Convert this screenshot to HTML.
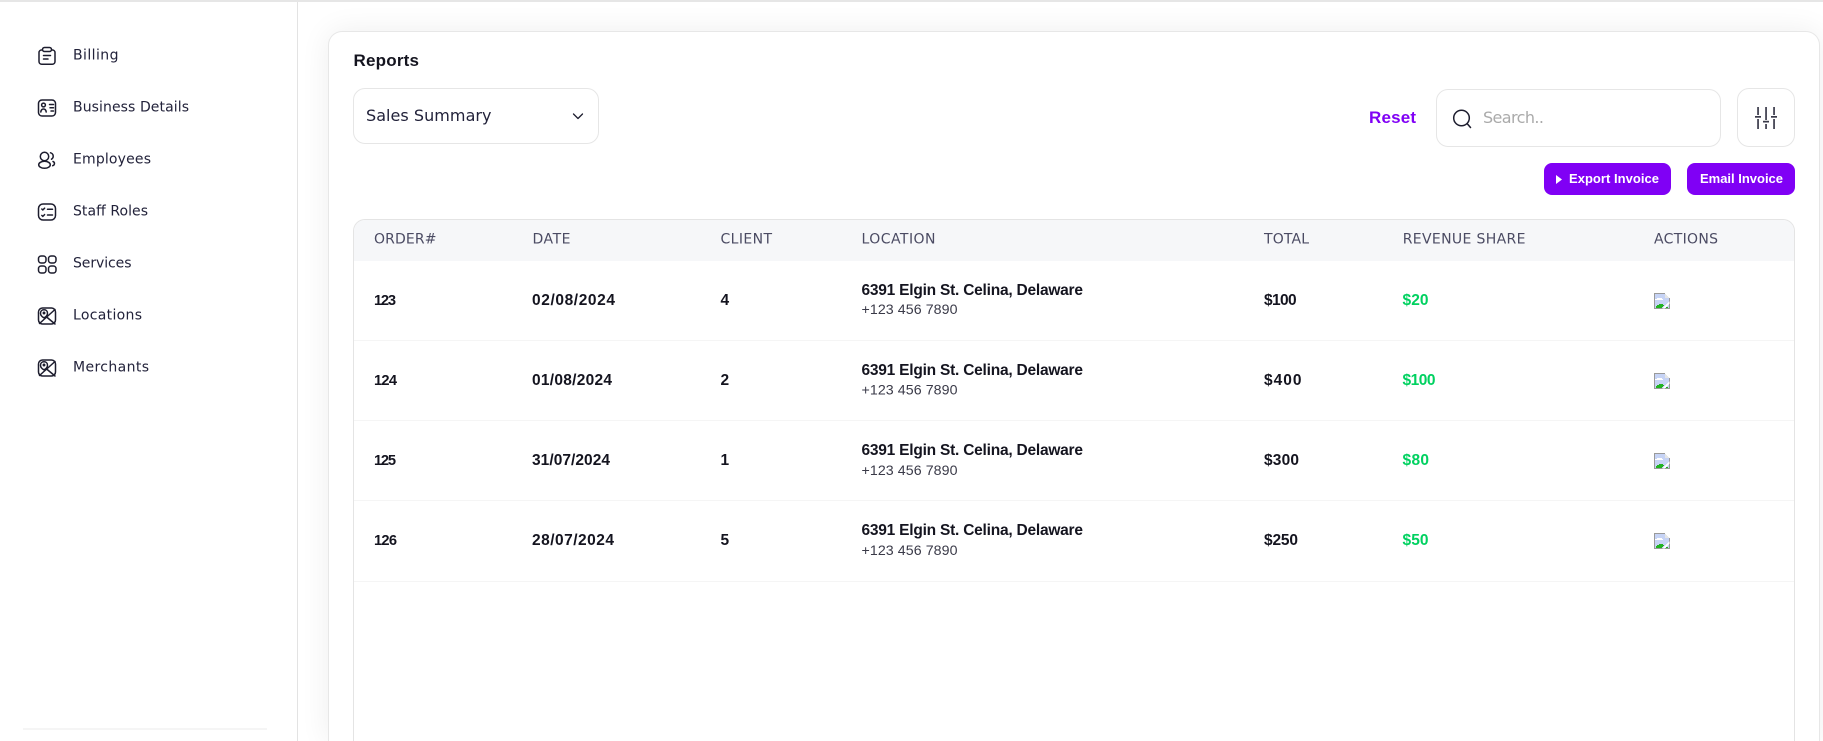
<!DOCTYPE html>
<html><head><meta charset="utf-8"><title>Reports</title>
<style>
html,body{margin:0;padding:0;width:1823px;height:741px;overflow:hidden;background:#fff}
#root{position:relative;width:1823px;height:741px;overflow:hidden;background:#fff}
#top{position:absolute;left:0;top:0;width:1823px;height:2px;background:#e6e6e6;z-index:3}
#side{position:absolute;left:0;top:0;width:297px;height:741px;background:#fff;border-right:1px solid #e3e3e3;z-index:2}
#rule{position:absolute;left:23px;top:728px;width:244px;height:2px;background:#f5f5f5}
#card{position:absolute;left:328px;top:31px;width:1490px;height:710px;background:#fff;border:1px solid #e7e7e7;border-bottom:none;border-radius:14px 14px 0 0;box-shadow:0 0 30px rgba(0,0,0,.07);clip-path:inset(-40px -40px 0 -40px)}
.box{position:absolute;box-sizing:border-box;background:#fff;border:1px solid #e6e6e6;border-radius:12px}
#table{position:absolute;left:353px;top:219px;width:1442px;height:522px;box-sizing:border-box;border:1px solid #e4e4e4;border-bottom:none;border-radius:12px 12px 0 0;overflow:hidden;background:#fff}
#thead{height:41px;background:#f6f7f9}
.rowline{position:absolute;left:354px;width:1440px;height:1px;background:#f5f5f5}
.btn{position:absolute;background:#8000f5;border-radius:8px;top:163px;height:32px}
svg#o{position:absolute;left:0;top:0;z-index:4}
text{white-space:pre}
.n{font:400 14px "DejaVu Sans","Liberation Sans",sans-serif;fill:#22223a}
.h{font:400 14px "DejaVu Sans","Liberation Sans",sans-serif;fill:#4b4b63}
.b{font:700 15.5px "Liberation Sans",sans-serif;fill:#14141f}
.o{font:700 14.7px "Liberation Sans",sans-serif;fill:#14141f}
.g{font:700 15.5px "Liberation Sans",sans-serif;fill:#00d160}
.p{font:400 14.2px "Liberation Sans",sans-serif;fill:#3a3a48}
.w{font:700 13px "Liberation Sans",sans-serif;fill:#fff}
.i{fill:none;stroke:#1d1d2e;stroke-width:1.5;stroke-linecap:round;stroke-linejoin:round}
</style></head>
<body>
<div id="root">
<div id="card"></div>
<div id="side"><div id="rule"></div></div>
<div id="top"></div>
<div class="box" style="left:353px;top:88px;width:246px;height:56px"></div>
<div class="box" style="left:1436px;top:89px;width:285px;height:58px"></div>
<div class="box" style="left:1737px;top:88px;width:58px;height:59px"></div>
<div class="btn" style="left:1544px;width:127px"></div>
<div class="btn" style="left:1687px;width:108px"></div>
<div id="table"><div id="thead"></div></div>
<div class="rowline" style="top:340px"></div>
<div class="rowline" style="top:420px"></div>
<div class="rowline" style="top:500px"></div>
<div class="rowline" style="top:581px"></div>

<svg id="o" width="1823" height="741" viewBox="0 0 1823 741" xmlns="http://www.w3.org/2000/svg">
<defs>
<g id="broken" shape-rendering="crispEdges">
<path d="M0 0h11v1h-11zM0 0h1v16h-1zM0 15h16v1h-16zM15 5h1v11h-1z" fill="#9a9a9a"/>
<path d="M1 1h10v4h4v10h-14z" fill="#c6d3f5"/>
<path d="M11 1l4 4h-4z" fill="#fff"/>
<path d="M11 1h1v1h1v1h1v1h1v1h-4z" fill="#e6e6e6"/>
<path d="M3 5h5v1h1v1h-8v-1h2z" fill="#fff"/>
<path d="M2 15v-2h1v-1h2v-1h4v1h1v1h-1v1h-1v1z" fill="#22b322"/>
<path d="M12 15v-1h2v1z" fill="#22b322"/>
<path d="M8 15.5l7.5-7.5v2.5l-5 5z" fill="#fff"/>
</g>
</defs>

<!-- sidebar icons -->
<g class="i">
<path d="M42 50h-.5a2.5 2.5 0 0 0-2.5 2.5v9a2.8 2.8 0 0 0 2.8 2.8h10.4a2.8 2.8 0 0 0 2.8-2.8v-9a2.5 2.5 0 0 0-2.5-2.5H52"/>
<rect x="42.5" y="47.5" width="9" height="4" rx="2"/>
<path d="M43.5 55.5h7M43.5 59h4.5"/>
<rect x="38.5" y="100" width="17" height="16" rx="3.5"/>
<circle cx="43.5" cy="105" r="1.9"/>
<path d="M40.8 112c.3-2.2 1.4-3 2.7-3s2.4.8 2.7 3M49.5 104.5h4M50 107.8h3.5M51 111h2.5"/>
<circle cx="44.5" cy="156.5" r="4.2"/>
<ellipse cx="44.5" cy="164.8" rx="5.8" ry="3.5"/>
<path d="M50.5 152.8a3.5 3.5 0 0 1 1 6.4M53 161.5c2 .8 2 3.4-.3 4.2"/>
<rect x="38.5" y="204" width="17" height="16" rx="4.5"/>
<path d="M41.8 209l1 1 1.8-1.8M41.8 215.4l1 1 1.8-1.8M47.5 209.3h5M47.5 215h5"/>
<rect x="38.5" y="256" width="7.5" height="7" rx="2.6"/><rect x="48.5" y="256" width="7.5" height="7" rx="2.6"/>
<rect x="38.5" y="266" width="7.5" height="7" rx="2.6"/><rect x="48.5" y="266" width="7.5" height="7" rx="2.6"/>
<rect x="38.5" y="308" width="17" height="16" rx="4"/>
<path d="M44 309.8c-2.2 0-3.5 1.5-3.5 3.4 0 2 2 3.8 3.5 4.6 1.5-.8 3.5-2.6 3.5-4.6 0-1.9-1.3-3.4-3.5-3.4zM39.5 323.5l15.5-14M46 316.5l9 7.5"/>
<circle cx="44" cy="313" r=".7"/>
<rect x="38.5" y="360" width="17" height="16" rx="4"/>
<path d="M44 361.8c-2.2 0-3.5 1.5-3.5 3.4 0 2 2 3.8 3.5 4.6 1.5-.8 3.5-2.6 3.5-4.6 0-1.9-1.3-3.4-3.5-3.4zM39.5 375.5l15.5-14M46 368.5l9 7.5"/>
<circle cx="44" cy="365" r=".7"/>
<path d="M573.5 114l4.5 4.5 4.5-4.5" stroke-width="1.3"/>
<circle cx="1461.5" cy="118" r="7.8" stroke-width="1.5"/>
<path d="M1467.5 124l3 3.5" stroke-width="1.5"/>
</g>
<g fill="#3a3a4a">
<rect x="1757.2" y="107" width="1.7" height="8"/><rect x="1757.2" y="119" width="1.7" height="10"/><rect x="1755" y="116" width="6" height="1.7"/>
<rect x="1765.2" y="107" width="1.7" height="13"/><rect x="1765.2" y="124" width="1.7" height="5"/><rect x="1763" y="120.8" width="6" height="1.7"/>
<rect x="1773.2" y="107" width="1.7" height="8"/><rect x="1773.2" y="119" width="1.7" height="10"/><rect x="1771" y="116" width="6" height="1.7"/>
</g>

<!-- sidebar labels -->
<text class="n" x="73" y="59.7" textLength="45.5">Billing</text>
<text class="n" x="73" y="111.7" textLength="116">Business Details</text>
<text class="n" x="73" y="163.7" textLength="78">Employees</text>
<text class="n" x="73" y="215.7" textLength="75">Staff Roles</text>
<text class="n" x="73" y="267.7" textLength="58.5">Services</text>
<text class="n" x="73" y="319.7" textLength="69">Locations</text>
<text class="n" x="73" y="371.7" textLength="76">Merchants</text>

<!-- top controls -->
<text class="b" style="font-size:17px" x="353.5" y="66" textLength="65.5">Reports</text>
<text class="n" style="font-size:16px" x="366" y="121" textLength="125.5">Sales Summary</text>
<text class="b" style="font-size:17px;fill:#8000f5" x="1369" y="123" textLength="47">Reset</text>
<text class="n" style="font-size:16px;fill:#aaa" x="1483" y="123" textLength="61">Search..</text>
<path d="M1556 175v9l6-4.5z" fill="#fff"/>
<text class="w" x="1569" y="183" textLength="90">Export Invoice</text>
<text class="w" x="1700" y="183" textLength="83">Email Invoice</text>

<!-- table head -->
<text class="h" x="374" y="243.6" textLength="62.5">ORDER#</text>
<text class="h" x="532.5" y="243.6" textLength="38">DATE</text>
<text class="h" x="720.5" y="243.6" textLength="51.5">CLIENT</text>
<text class="h" x="861.5" y="243.6" textLength="74">LOCATION</text>
<text class="h" x="1264" y="243.6" textLength="45">TOTAL</text>
<text class="h" x="1402.7" y="243.6" textLength="122.8">REVENUE SHARE</text>
<text class="h" x="1654" y="243.6" textLength="64">ACTIONS</text>

<!-- row 1 -->
<text class="o" x="374" y="305" textLength="22">123</text>
<text class="b" x="532" y="305" textLength="83">02/08/2024</text>
<text class="b" x="720.5" y="305" textLength="9">4</text>
<text class="b" x="861.5" y="295" textLength="221.5">6391 Elgin St. Celina, Delaware</text>
<text class="p" x="861.5" y="314" textLength="96">+123 456 7890</text>
<text class="b" x="1264" y="305" textLength="32.6">$100</text>
<text class="g" x="1402.5" y="305" textLength="26">$20</text>
<use href="#broken" x="1654" y="293"/>

<!-- row 2 -->
<text class="o" x="374" y="385" textLength="23">124</text>
<text class="b" x="532" y="385" textLength="80">01/08/2024</text>
<text class="b" x="720.5" y="385" textLength="8.5">2</text>
<text class="b" x="861.5" y="375" textLength="221.5">6391 Elgin St. Celina, Delaware</text>
<text class="p" x="861.5" y="394.5" textLength="96">+123 456 7890</text>
<text class="b" x="1264" y="385" textLength="37.5">$400</text>
<text class="g" x="1402.5" y="385" textLength="33">$100</text>
<use href="#broken" x="1654" y="373"/>

<!-- row 3 -->
<text class="o" x="374" y="465" textLength="22">125</text>
<text class="b" x="532" y="465" textLength="78">31/07/2024</text>
<text class="b" x="720.5" y="465" textLength="5.5">1</text>
<text class="b" x="861.5" y="455" textLength="221.5">6391 Elgin St. Celina, Delaware</text>
<text class="p" x="861.5" y="475" textLength="96">+123 456 7890</text>
<text class="b" x="1264" y="465" textLength="35">$300</text>
<text class="g" x="1402.5" y="465" textLength="26.5">$80</text>
<use href="#broken" x="1654" y="453"/>

<!-- row 4 -->
<text class="o" x="374" y="545" textLength="23">126</text>
<text class="b" x="532" y="545" textLength="82">28/07/2024</text>
<text class="b" x="720.5" y="545" textLength="8.5">5</text>
<text class="b" x="861.5" y="535" textLength="221.5">6391 Elgin St. Celina, Delaware</text>
<text class="p" x="861.5" y="555" textLength="96">+123 456 7890</text>
<text class="b" x="1264" y="545" textLength="34">$250</text>
<text class="g" x="1402.5" y="545" textLength="26">$50</text>
<use href="#broken" x="1654" y="533"/>
</svg>
</div>
</body></html>
